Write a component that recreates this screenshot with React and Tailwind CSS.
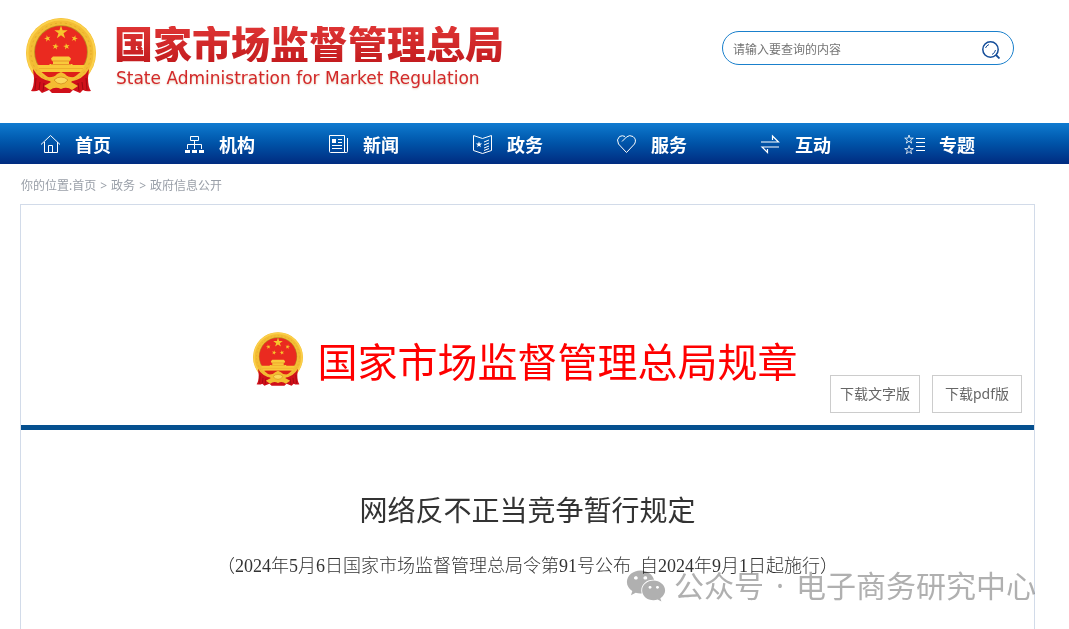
import React from 'react';
import { FaWeixin } from 'react-icons/fa6';

const NAV = [
  { label: '首页', icon: HomeIcon },
  { label: '机构', icon: OrgIcon },
  { label: '新闻', icon: NewsIcon },
  { label: '政务', icon: PolicyIcon },
  { label: '服务', icon: HeartIcon },
  { label: '互动', icon: ExchangeIcon },
  { label: '专题', icon: TopicIcon },
];

const STAR = '0,-1 0.225,-0.309 0.951,-0.309 0.363,0.118 0.588,0.809 0,0.382 -0.588,0.809 -0.363,0.118 -0.951,-0.309 -0.225,-0.309';

function Star({ x, y, r, rotate = 0 }) {
  return <polygon points={STAR} transform={`translate(${x} ${y}) rotate(${rotate}) scale(${r})`} fill="#f7c52c" />;
}

function Emblem({ className }) {
  return (
    <svg viewBox="0 0 70 75" className={className} role="img" aria-label="国徽">
      <circle cx="35" cy="35" r="35" fill="#f3bd34" />
      <circle cx="35" cy="35" r="33.500" fill="none" stroke="#fbd04a" strokeWidth="2" />
      <circle cx="35" cy="35" r="30" fill="none" stroke="#e5aa2a" strokeWidth="1" strokeDasharray="2 3" />
      <circle cx="35" cy="34" r="26.8" fill="#b98920" />
      <circle cx="35" cy="34" r="26" fill="#ea2a20" />
      <Star x={35} y={14.5} r={7} />
      <Star x={21.5} y={20.5} r={3.4} rotate={-15} />
      <Star x={48.5} y={20.5} r={3.4} rotate={15} />
      <Star x={29.5} y={28.5} r={3.4} rotate={10} />
      <Star x={40.5} y={28.5} r={3.4} rotate={-10} />
      <path d="M25 40.500 L27 38.500 H43 L45 40.500 L44 43 H26Z M27 43 H43 V46 H27Z M23.500 46 H46.500 V50 H23.500Z" fill="#f9ca3b" />
      <path d="M26 43 H44 M25 46.500 H45" stroke="#e58a24" strokeWidth="0.800" />
      <path d="M11 47 H59 Q57 52 54.500 54 H15.500 Q13 52 11 47Z" fill="#f9c838" />
      <path d="M13 50.500 H57" stroke="#eaa92b" strokeWidth="0.800" />
      <path d="M15.500 54 H54.500 Q45 63 35 63 Q25 63 15.500 54Z" fill="#de2018" />
      <path d="M7 51 Q13 62 27 64 L27 69 L48 69 L43 64 Q57 62 63 51 L62 60 Q62 69 65 73 Q60 74 57 72 L54 75 L47 72 L44 75 H26 L23 72 L16 75 L13 72 Q10 74 5 73 Q8 69 8 60Z" fill="#d0101a" />
      <path d="M10 60 L9 72 M14 64 L13 72 M18 65 L17 73 M60 60 L61 72 M56 64 L57 72 M52 65 L53 73" stroke="#9d0911" strokeWidth="1" />
      <path d="M20 59 Q28 60 31 56 L35 54 L39 56 Q42 60 50 59 L45 64 L52 68 L46 72 Q41 68 35 71 Q29 68 24 72 L18 68 L25 64Z" fill="#f4bd32" />
      <path d="M28 62 Q31 59 35 59 Q39 59 42 62 Q39 66 35 66 Q31 66 28 62Z" fill="#fbd95a" stroke="#d28b1c" strokeWidth="0.800" />
    </svg>
  );
}

function NavSvg({ children }) {
  return (
    <svg viewBox="0 0 21 21" className="size-[21px] shrink-0" fill="none" stroke="white" strokeWidth="1" aria-hidden="true">
      {children}
    </svg>
  );
}

function HomeIcon() {
  return (
    <NavSvg>
      <path d="M1 10.500 L10.500 1.500 L20 10.500 M4.500 8 V18.500 H17.500 V8 M8.500 18 V11.500 H12.500 V18" />
    </NavSvg>
  );
}

function OrgIcon() {
  return (
    <NavSvg>
      <path d="M6.500 2.500 H14.500 V6.500 H6.500Z M10.500 6.500 V15 M3.500 15 V10.500 H17.500 V15" />
      <path d="M1 17.500 H6 M8 17.500 H13 M15 17.500 H20" strokeWidth="3" />
    </NavSvg>
  );
}

function NewsIcon() {
  return (
    <NavSvg>
      <path d="M1.500 1.500 H16.500 V18.500 H2.500 Q1.500 18.500 1.500 17.500Z M16.500 18.500 H18.500 Q19.500 18.500 19.500 17.500 V4 M10 5.500 H14 M10 8.500 H14 M4 11.500 H14 M4 14.500 H14" />
      <path d="M4 5 H8 V9 H4Z" fill="white" stroke="none" />
    </NavSvg>
  );
}

function PolicyIcon() {
  return (
    <NavSvg>
      <path d="M1.500 1.500 L10.500 4.500 L19.500 1.500 V16.500 L10.500 19.500 L1.500 16.500Z M12 8 L17 6 M12 11 L17 9 M12 14 L17 12 M12 16.500 L17 14.500" />
      <polygon points={STAR} transform="translate(7 10.500) scale(3.300)" fill="white" stroke="none" />
    </NavSvg>
  );
}

function HeartIcon() {
  return (
    <NavSvg>
      <path d="M6 7.500 L10.500 3 Q13.500 0.500 17 2.500 Q21 5.500 18.500 10 L10.500 18.500 L2.500 10 Q0 5.500 3.500 2.500 Q6.500 1 9 2.500" />
    </NavSvg>
  );
}

function ExchangeIcon() {
  return (
    <NavSvg>
      <path d="M1 8 H18.500 L12.500 2 V6 M19 13 H2 L7.500 18.500 V15" strokeWidth="1.200" />
    </NavSvg>
  );
}

function TopicIcon() {
  return (
    <NavSvg>
      <path d="M12 4.500 H21 M12 8.500 H21 M12 12.500 H21 M12 16.500 H21" />
      <polygon points={STAR} transform="translate(5 5.500) scale(4.500)" strokeWidth="0.220" opacity="0.800" />
      <polygon points={STAR} transform="translate(5 16) scale(4.500)" strokeWidth="0.220" opacity="0.800" />
    </NavSvg>
  );
}

function SearchIcon() {
  return (
    <svg viewBox="0 0 18 18" className="size-[18px]" fill="none" stroke="#144d99" aria-hidden="true">
      <circle cx="8.500" cy="8.500" r="7.700" strokeWidth="1.500" />
      <path d="M14 14 L17.500 17.500" strokeWidth="1.800" />
      <path d="M3.500 7 Q4.500 4.500 7 3.500 M13.500 9 Q13 12 10 13.500" strokeWidth="1" />
    </svg>
  );
}

export default function App() {
  return (
    <div className="relative min-h-screen overflow-hidden bg-white font-['Noto_Sans','Noto_Sans_CJK_SC',sans-serif] text-[#333]">
      <header className="flex h-[123px] items-start justify-between pr-[55px] pl-[26px]">
        <a href="#" className="flex gap-[18px] pt-[18px]">
          <Emblem className="h-[75px] w-[70px] shrink-0" />
          <span className="flex flex-col gap-1 pt-2 text-[#d3282a]">
            <span className="bg-linear-to-b from-[#de3434] to-[#c41c1f] bg-clip-text text-[39px] leading-9 font-black text-transparent">国家市场监督管理总局</span>
            <span className="pl-[2px] font-['DejaVu_Sans',sans-serif] text-[17px] leading-6 [text-shadow:0_1px_2px_#e3d0b8]">State Administration for Market Regulation</span>
          </span>
        </a>
        <form className="mt-[31px] flex h-[34px] w-[292px] items-center rounded-full border border-[#1a80cc] pr-[13px] pl-[10px]" onSubmit={(e) => e.preventDefault()}>
          <input type="search" aria-label="请输入要查询的内容" placeholder="请输入要查询的内容" className="min-w-0 flex-1 bg-transparent pt-1 text-xs outline-none placeholder:text-[#757575]" />
          <button type="submit" aria-label="搜索" className="pt-1">
            <SearchIcon />
          </button>
        </form>
      </header>

      <nav className="flex h-[41px] items-center bg-linear-to-b from-[#107bd0] to-[#002b80] pt-[2px] pl-10">
        {NAV.map(({ label, icon: Icon }) => (
          <a key={label} href="#" className="flex w-36 shrink-0 items-center gap-[14px] text-lg font-bold text-white">
            <Icon />
            {label}
          </a>
        ))}
      </nav>

      <div className="flex h-10 items-center px-[21px] pt-1 text-xs text-[#999fa8]">
        <span>你的位置:</span>
        <a href="#">首页</a>
        <span className="px-1">&gt;</span>
        <a href="#">政务</a>
        <span className="px-1">&gt;</span>
        <a href="#">政府信息公开</a>
      </div>

      <main className="mr-[34px] ml-5 min-h-[426px] border border-[#d2dbe9]">
        <div className="relative flex h-[225px] items-end justify-center border-b-[5px] border-[#05508f] pr-[5px] pb-[33px]">
          <div className="flex items-start gap-[15px]">
            <Emblem className="h-[54px] w-[50px] shrink-0" />
            <h2 className="text-[40px] leading-[60px] text-[#f00]">国家市场监督管理总局规章</h2>
          </div>
          <div className="absolute right-3 bottom-3 flex gap-3 text-sm text-[#666]">
            <button type="button" className="h-[38px] w-[90px] border border-[#ccc] bg-white">下载文字版</button>
            <button type="button" className="h-[38px] w-[90px] border border-[#ccc] bg-white">下载pdf版</button>
          </div>
        </div>
        <article className="pt-[60px] text-center">
          <h1 className="text-[28px] leading-10">网络反不正当竞争暂行规定</h1>
          <p className="mt-[22px] font-['Liberation_Serif','Noto_Sans_CJK_SC',serif] text-lg leading-7 font-light whitespace-pre-wrap">（2024年5月6日国家市场监督管理总局令第91号公布  自2024年9月1日起施行）</p>
        </article>
      </main>

      <div className="absolute right-[33px] bottom-[22px] flex items-center gap-2 text-[30px] leading-[44px] text-[#b0b0b0] mix-blend-multiply">
        <FaWeixin className="size-10" aria-hidden="true" />
        <span className="flex gap-3">
          <span>公众号</span>
          <span>·</span>
          <span>电子商务研究中心</span>
        </span>
      </div>
    </div>
  );
}
